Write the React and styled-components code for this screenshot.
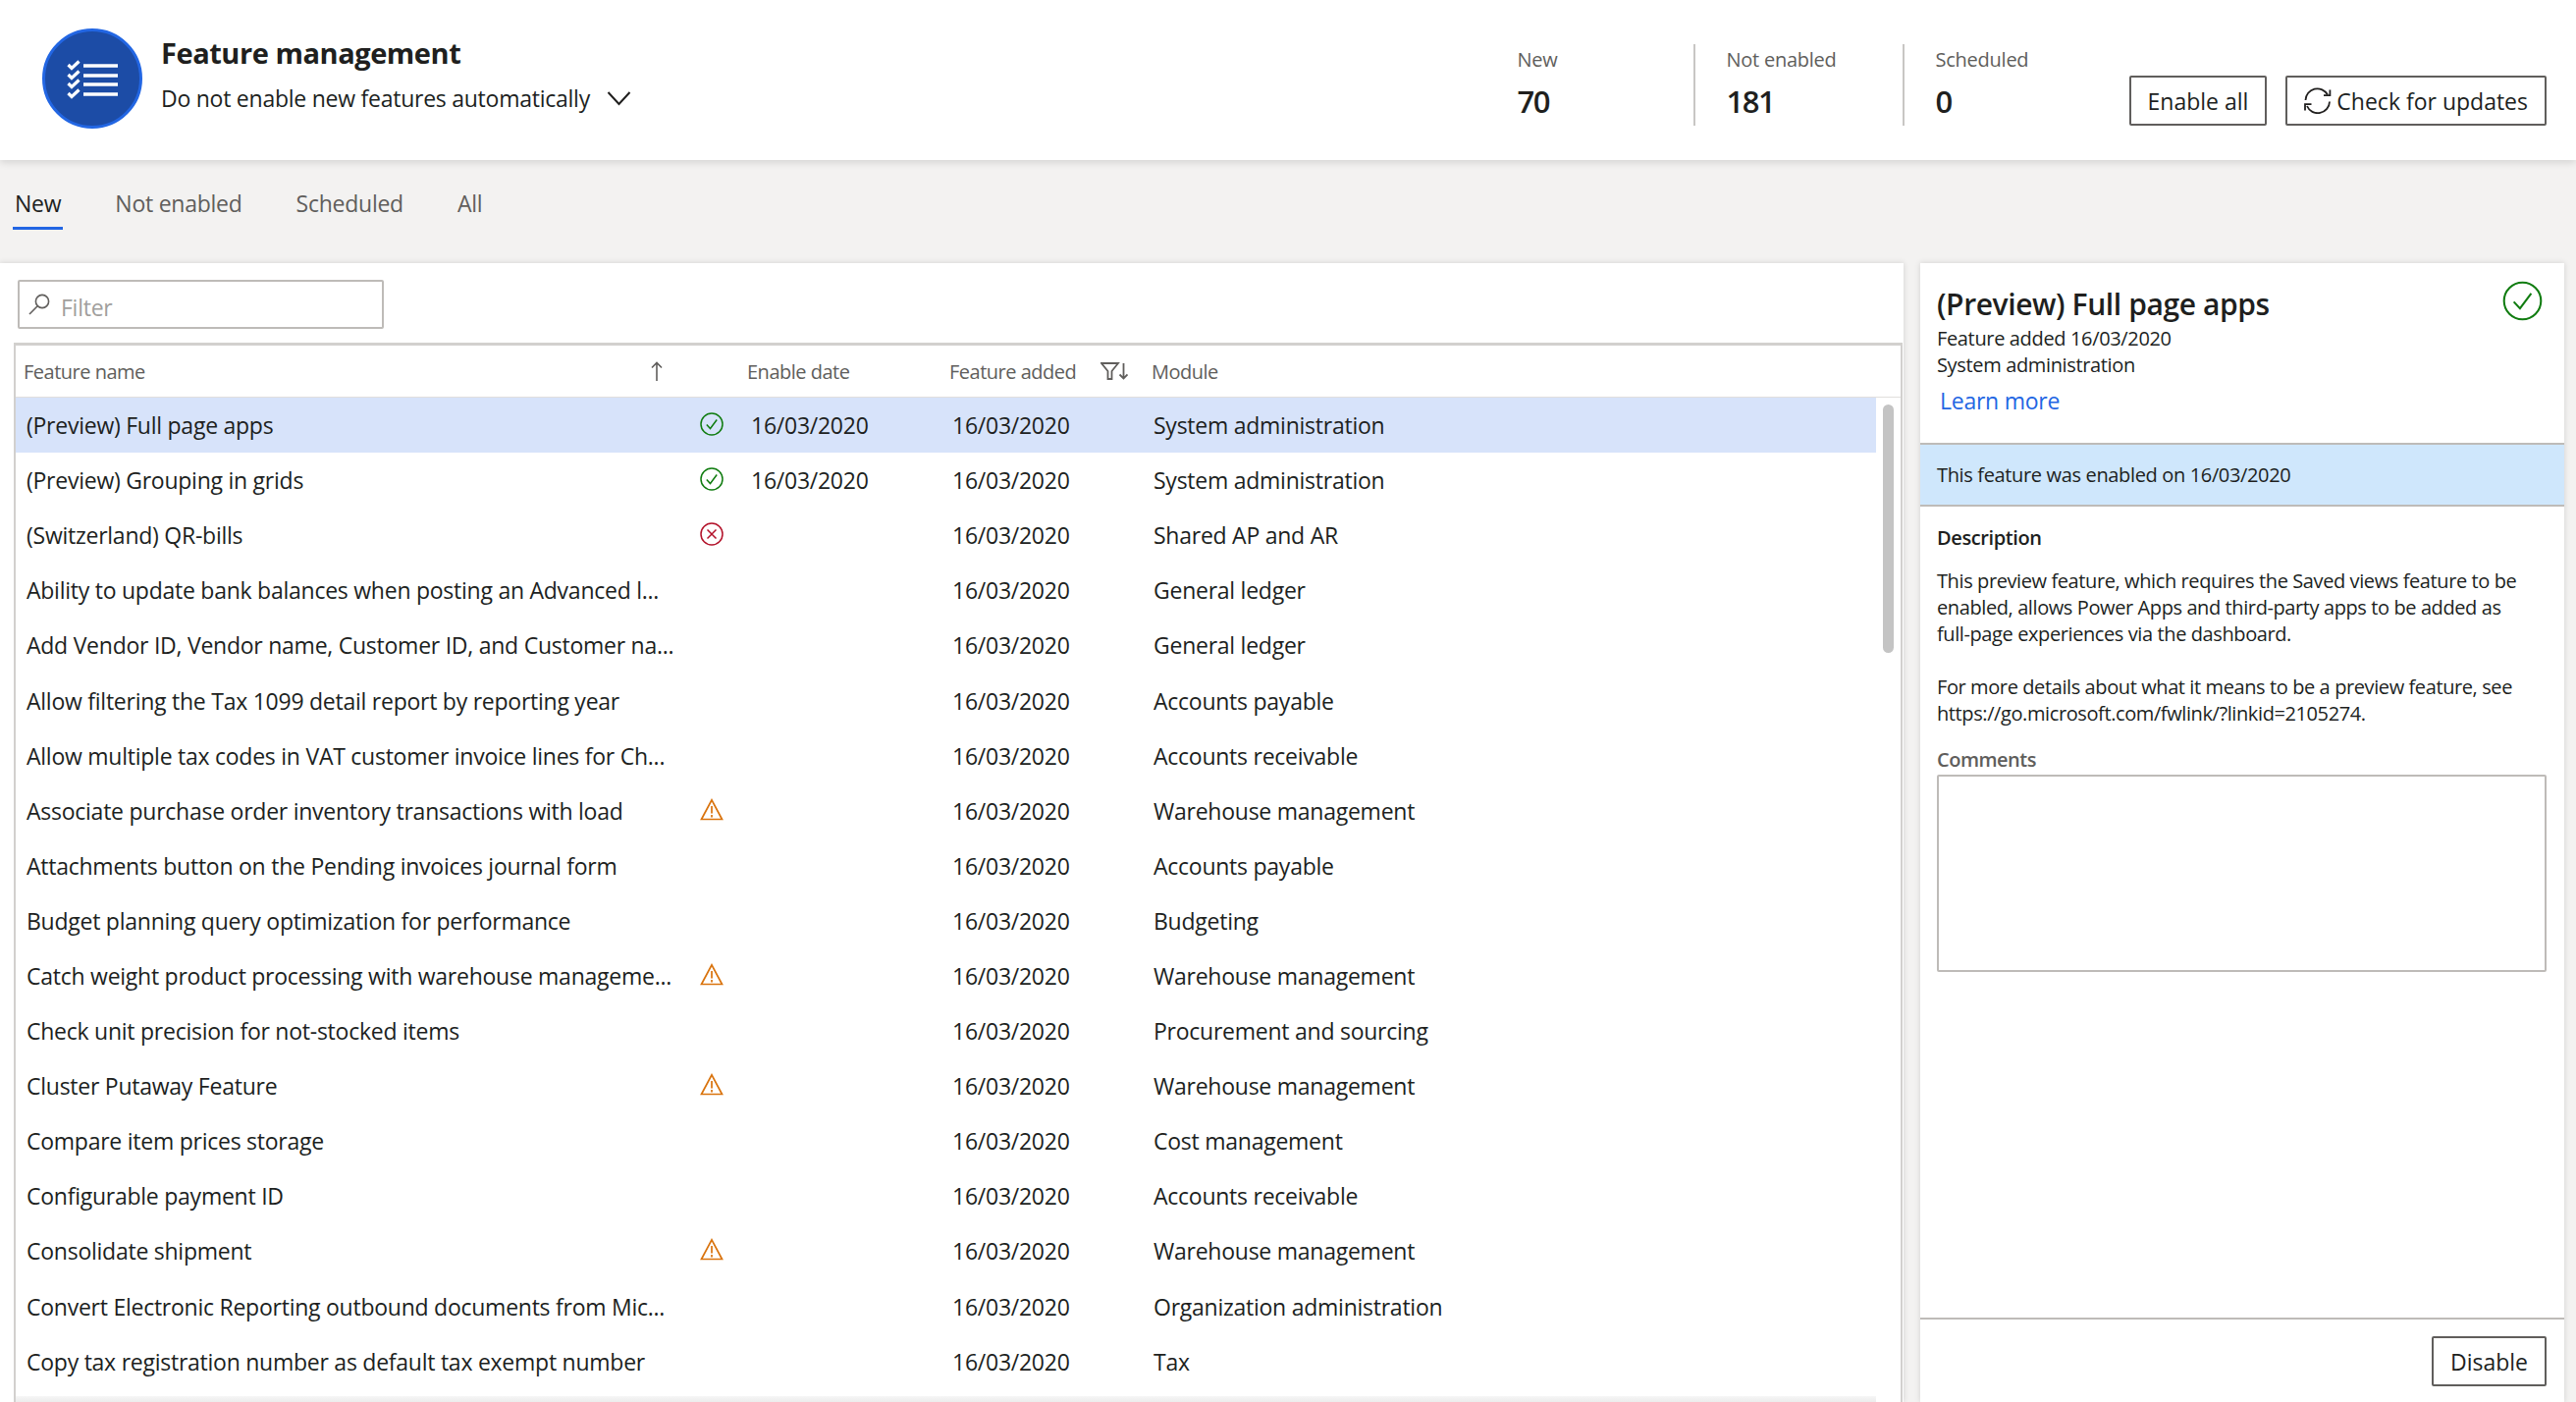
import styled, { createGlobalStyle } from "styled-components";

const GlobalStyle = createGlobalStyle`
  html, body {
    margin: 0;
    padding: 0;
    background: #f3f2f1;
  }
  * {
    box-sizing: border-box;
  }
`;

const Page = styled.div`
  width: 2624px;
  height: 1428px;
  overflow: hidden;
  display: flex;
  flex-direction: column;
  background: #f3f2f1;
  color: #201f1e;
  font-family: "Open Sans", "Noto Sans", sans-serif;
  font-size: 23px;
  letter-spacing: -0.25px;
`;

const Header = styled.header`
  position: relative;
  z-index: 2;
  flex: none;
  height: 163px;
  display: flex;
  align-items: center;
  padding: 0 30px 0 43px;
  background: #fff;
  box-shadow: 0 2px 8px rgba(0, 0, 0, 0.14);
`;

const Badge = styled.svg`
  width: 102px;
  height: 102px;
  flex: none;
  margin-top: -3px;
`;

const TitleBlock = styled.div`
  display: flex;
  flex-direction: column;
  gap: 8px;
  margin-left: 19px;
  margin-top: -13px;
`;

const PageTitle = styled.h1`
  margin: 0;
  font-size: 29px;
  line-height: 42px;
  font-weight: 700;
  letter-spacing: -0.45px;
`;

const AutoSelect = styled.div`
  display: flex;
  align-items: center;
  gap: 17px;
  line-height: 34px;
`;

const HeaderRight = styled.div`
  margin-left: auto;
  margin-top: 10px;
  display: flex;
  align-items: flex-end;
`;

const Stat = styled.div`
  width: 213px;
  height: 83px;
  padding-left: ${(p) => (p.$first ? "34px" : "32px")};
  border-left: ${(p) => (p.$first ? "none" : "2px solid #c8c6c4")};
`;

const StatLabel = styled.div`
  font-size: 20px;
  line-height: 32px;
  color: #605e5c;
  font-weight: 500;
`;

const StatValue = styled.div`
  font-size: 31px;
  line-height: 44px;
  margin-top: 4px;
  font-weight: 600;
  letter-spacing: -1.5px;
`;

const Buttons = styled.div`
  display: flex;
  gap: 19px;
  margin-left: 18px;
`;

const Button = styled.button`
  height: 51px;
  display: inline-flex;
  align-items: center;
  gap: 5px;
  padding: 0 17px;
  background: #fff;
  border: 2px solid #605e5c;
  border-radius: 2px;
  color: #201f1e;
  font-family: inherit;
  font-size: 23px;
  font-weight: 500;
  letter-spacing: 0;
`;

const Tabs = styled.nav`
  flex: none;
  height: 105px;
  display: flex;
  align-items: flex-start;
  gap: 51px;
  padding: 27px 0 0 13px;
`;

const Tab = styled.div`
  padding: 0 2px 7px;
  line-height: 34px;
  color: ${(p) => (p.$active ? "#201f1e" : "#605e5c")};
  border-bottom: 3px solid ${(p) => (p.$active ? "#2266e3" : "transparent")};
`;

const Content = styled.main`
  flex: 1;
  min-height: 0;
  display: flex;
  gap: 17px;
  padding-right: 12px;
`;

const ListPanel = styled.section`
  width: 1939px;
  flex: none;
  display: flex;
  flex-direction: column;
  padding: 17px 0 0 14px;
  background: #fff;
  box-shadow: 0 0 6px rgba(0, 0, 0, 0.14);
`;

const FilterBox = styled.div`
  width: 373px;
  height: 50px;
  flex: none;
  margin-left: 4px;
  display: flex;
  align-items: center;
  gap: 11px;
  padding-left: 9px;
  border: 2px solid #bebbb8;
  border-radius: 2px;
  color: #a19f9d;
`;

const FilterText = styled.span`
  margin-top: 5px;
`;

const Grid = styled.div`
  flex: 1;
  min-height: 0;
  width: 1924px;
  margin-top: 14px;
  border-top: 3px solid #d2d0ce;
  border-left: 2px solid #d2d0ce;
  border-right: 2px solid #d2d0ce;
`;

const columns = "684px 50px 205px 205px 1fr";

const GridHead = styled.div`
  height: 53px;
  display: grid;
  grid-template-columns: ${columns};
  align-items: center;
  border-bottom: 1px solid #e1dfdd;
  font-size: 20px;
  letter-spacing: -0.5px;
  color: #605e5c;
`;

const HeadCell = styled.div`
  display: flex;
  align-items: center;
  justify-content: space-between;
  padding-left: ${(p) => p.$left}px;
  padding-right: ${(p) => p.$right || 0}px;
`;

const GridBody = styled.div`
  display: flex;
`;

const RowList = styled.div`
  width: 1895px;
  flex: none;
`;

const Row = styled.div`
  height: 56.1px;
  display: grid;
  grid-template-columns: ${columns};
  align-items: center;
  background: ${(p) => (p.$selected ? "#d7e3fa" : "transparent")};
`;

const NameCell = styled.div`
  padding-left: 11px;
  white-space: nowrap;
`;

const IconCell = styled.div`
  display: flex;
  justify-content: center;
  margin-top: -3px;
`;

const Cell = styled.div`
  padding-left: 15px;
  white-space: nowrap;
`;

const HorizontalBar = styled.div`
  height: 6px;
  margin-top: 7px;
  background: linear-gradient(#f6f6f6, #ececec);
`;

const VerticalTrack = styled.div`
  padding: 7px 0 0 7px;
`;

const Thumb = styled.div`
  width: 11px;
  height: 253px;
  border-radius: 6px;
  background: #c4c4c4;
`;

const DetailPanel = styled.aside`
  width: 656px;
  flex: none;
  display: flex;
  flex-direction: column;
  background: #fff;
  box-shadow: 0 0 6px rgba(0, 0, 0, 0.14);
`;

const DetailHead = styled.div`
  height: 183px;
  flex: none;
  padding: 18px 22px 0 17px;
`;

const DetailTitleRow = styled.div`
  display: flex;
  justify-content: space-between;
  align-items: flex-start;
`;

const DetailTitle = styled.h2`
  margin: 3px 0 0;
  font-size: 30px;
  line-height: 42px;
  font-weight: 600;
  letter-spacing: -0.4px;
`;

const DetailLine = styled.div`
  font-size: 20px;
  line-height: 27px;
  letter-spacing: -0.35px;
`;

const LearnMore = styled.a`
  display: block;
  margin: 6px 0 0 3px;
  line-height: 34px;
  color: #2266e3;
`;

const Notice = styled.div`
  height: 65px;
  flex: none;
  display: flex;
  align-items: center;
  padding-left: 17px;
  background: #cfe7fc;
  border-top: 2px solid #bebbb8;
  border-bottom: 2px solid #bebbb8;
  font-size: 20px;
  letter-spacing: -0.35px;
`;

const DetailBody = styled.div`
  flex: 1;
  min-height: 0;
  padding: 18px 18px 0 17px;
  font-size: 20px;
  line-height: 27px;
  letter-spacing: -0.4px;
`;

const SectionLabel = styled.div`
  font-weight: 600;
`;

const Description = styled.p`
  margin: 17px 0 0;
`;

const CommentsLabel = styled.div`
  margin-top: 20px;
  font-weight: 600;
  letter-spacing: -0.5px;
  color: #605e5c;
`;

const Comments = styled.textarea`
  display: block;
  width: 100%;
  height: 201px;
  margin-top: 2px;
  border: 2px solid #bebbb8;
  border-radius: 2px;
  resize: none;
  background: #fff;
`;

const DetailFooter = styled.div`
  height: 86px;
  flex: none;
  display: flex;
  justify-content: flex-end;
  padding: 17px 18px 0 0;
  border-top: 2px solid #bebbb8;
`;

function ListBadge() {
  return (
    <Badge viewBox="0 0 102 102">
      <circle cx="51" cy="51" r="49.5" fill="#1c4ca6" stroke="#2266e3" strokeWidth="3" />
      {[38, 48, 57, 67].map((y) => (
        <g key={y}>
          <path d={`M42 ${y}H77`} stroke="#fff" strokeWidth="3.6" />
          <path d={`M26.5 ${y - 1}L30 ${y + 2.5}L37.5 ${y - 4.5}`} fill="none" stroke="#fff" strokeWidth="3.2" />
        </g>
      ))}
    </Badge>
  );
}

function Chevron() {
  return (
    <svg width="25" height="16" viewBox="0 0 25 16" fill="none" stroke="#201f1e" strokeWidth="2">
      <path d="M1.5 2L12.5 14L23.5 2" />
    </svg>
  );
}

function RefreshIcon() {
  return (
    <svg width="28" height="27" viewBox="0 0 28 27" fill="none" stroke="#201f1e" strokeWidth="1.8">
      <path d="M1.5 13A12 12 0 0 1 24 7.5" />
      <path d="M20 8.2H26.4V2.4" />
      <path d="M26 14.5A12 12 0 0 1 3 19" />
      <path d="M7.5 17.2H1V23.5" />
    </svg>
  );
}

function SearchIcon() {
  return (
    <svg width="22" height="22" viewBox="0 0 22 22" fill="none" stroke="#605e5c" strokeWidth="1.6">
      <circle cx="14" cy="8" r="6.6" />
      <path d="M9.2 12.8L1 21" />
    </svg>
  );
}

function SortArrow() {
  return (
    <svg width="14" height="20" viewBox="0 0 14 20" fill="none" stroke="#605e5c" strokeWidth="1.6">
      <path d="M7 20V1.5M2 6.5L7 1.5L12 6.5" />
    </svg>
  );
}

function FilterSortIcon() {
  return (
    <svg width="28" height="18" viewBox="0 0 28 18" fill="none" stroke="#605e5c" strokeWidth="1.8">
      <path d="M1 1H18L11.5 9V17H7.5V9Z" />
      <path d="M23.5 1V16.5M19.5 12.5L23.5 16.5L27.5 12.5" />
    </svg>
  );
}

function CheckCircle({ size = 24 }) {
  return (
    <svg width={size} height={size} viewBox="0 0 24 24" fill="none" stroke="#107c10" strokeWidth={size > 30 ? 1.2 : 1.5}>
      <circle cx="12" cy="12" r="11" />
      <path d="M6.8 12.5L10.5 16.5L17.2 7.5" />
    </svg>
  );
}

function ErrorCircle() {
  return (
    <svg width="24" height="24" viewBox="0 0 24 24" fill="none" stroke="#b3122a" strokeWidth="1.5">
      <circle cx="12" cy="12" r="11" />
      <path d="M7.5 7.5L16.5 16.5M16.5 7.5L7.5 16.5" />
    </svg>
  );
}

function WarningIcon() {
  return (
    <svg width="24" height="23" viewBox="0 0 24 23" fill="none" stroke="#d9730d" strokeWidth="1.7">
      <path d="M12 1.8L22.5 21.5H1.5Z" />
      <path d="M12 8V15.5M12 17V19.5" />
    </svg>
  );
}

const statusIcons = {
  ok: <CheckCircle />,
  error: <ErrorCircle />,
  warning: <WarningIcon />,
};

const features = [
  ["(Preview) Full page apps", "ok", "16/03/2020", "System administration"],
  ["(Preview) Grouping in grids", "ok", "16/03/2020", "System administration"],
  ["(Switzerland) QR-bills", "error", "", "Shared AP and AR"],
  ["Ability to update bank balances when posting an Advanced l...", "", "", "General ledger"],
  ["Add Vendor ID, Vendor name, Customer ID, and Customer na...", "", "", "General ledger"],
  ["Allow filtering the Tax 1099 detail report by reporting year", "", "", "Accounts payable"],
  ["Allow multiple tax codes in VAT customer invoice lines for Ch...", "", "", "Accounts receivable"],
  ["Associate purchase order inventory transactions with load", "warning", "", "Warehouse management"],
  ["Attachments button on the Pending invoices journal form", "", "", "Accounts payable"],
  ["Budget planning query optimization for performance", "", "", "Budgeting"],
  ["Catch weight product processing with warehouse manageme...", "warning", "", "Warehouse management"],
  ["Check unit precision for not-stocked items", "", "", "Procurement and sourcing"],
  ["Cluster Putaway Feature", "warning", "", "Warehouse management"],
  ["Compare item prices storage", "", "", "Cost management"],
  ["Configurable payment ID", "", "", "Accounts receivable"],
  ["Consolidate shipment", "warning", "", "Warehouse management"],
  ["Convert Electronic Reporting outbound documents from Mic...", "", "", "Organization administration"],
  ["Copy tax registration number as default tax exempt number", "", "", "Tax"],
];

export default function App() {
  return (
    <Page>
      <GlobalStyle />
      <Header>
        <ListBadge />
        <TitleBlock>
          <PageTitle>Feature management</PageTitle>
          <AutoSelect>
            Do not enable new features automatically
            <Chevron />
          </AutoSelect>
        </TitleBlock>
        <HeaderRight>
          <Stat $first>
            <StatLabel>New</StatLabel>
            <StatValue>70</StatValue>
          </Stat>
          <Stat>
            <StatLabel>Not enabled</StatLabel>
            <StatValue>181</StatValue>
          </Stat>
          <Stat>
            <StatLabel>Scheduled</StatLabel>
            <StatValue>0</StatValue>
          </Stat>
          <Buttons>
            <Button>Enable all</Button>
            <Button>
              <RefreshIcon />
              Check for updates
            </Button>
          </Buttons>
        </HeaderRight>
      </Header>

      <Tabs>
        <Tab $active>New</Tab>
        <Tab>Not enabled</Tab>
        <Tab>Scheduled</Tab>
        <Tab>All</Tab>
      </Tabs>

      <Content>
        <ListPanel>
          <FilterBox>
            <SearchIcon />
            <FilterText>Filter</FilterText>
          </FilterBox>
          <Grid>
            <GridHead>
              <HeadCell $left={8} $right={24}>
                Feature name
                <SortArrow />
              </HeadCell>
              <div />
              <HeadCell $left={11}>Enable date</HeadCell>
              <HeadCell $left={12} $right={11}>
                Feature added
                <FilterSortIcon />
              </HeadCell>
              <HeadCell $left={13}>Module</HeadCell>
            </GridHead>
            <GridBody>
              <RowList>
                {features.map(([name, status, enabled, module], i) => (
                  <Row key={name} $selected={i === 0}>
                    <NameCell>{name}</NameCell>
                    <IconCell>{statusIcons[status]}</IconCell>
                    <Cell>{enabled}</Cell>
                    <Cell>16/03/2020</Cell>
                    <Cell>{module}</Cell>
                  </Row>
                ))}
                <HorizontalBar />
              </RowList>
              <VerticalTrack>
                <Thumb />
              </VerticalTrack>
            </GridBody>
          </Grid>
        </ListPanel>

        <DetailPanel>
          <DetailHead>
            <DetailTitleRow>
              <DetailTitle>(Preview) Full page apps</DetailTitle>
              <CheckCircle size={41} />
            </DetailTitleRow>
            <DetailLine>Feature added 16/03/2020</DetailLine>
            <DetailLine>System administration</DetailLine>
            <LearnMore>Learn more</LearnMore>
          </DetailHead>
          <Notice>This feature was enabled on 16/03/2020</Notice>
          <DetailBody>
            <SectionLabel>Description</SectionLabel>
            <Description>
              This preview feature, which requires the Saved views feature to be
              <br />
              enabled, allows Power Apps and third-party apps to be added as
              <br />
              full-page experiences via the dashboard.
              <br />
              <br />
              For more details about what it means to be a preview feature, see
              <br />
              https://go.microsoft.com/fwlink/?linkid=2105274.
            </Description>
            <CommentsLabel>Comments</CommentsLabel>
            <Comments />
          </DetailBody>
          <DetailFooter>
            <Button>Disable</Button>
          </DetailFooter>
        </DetailPanel>
      </Content>
    </Page>
  );
}
